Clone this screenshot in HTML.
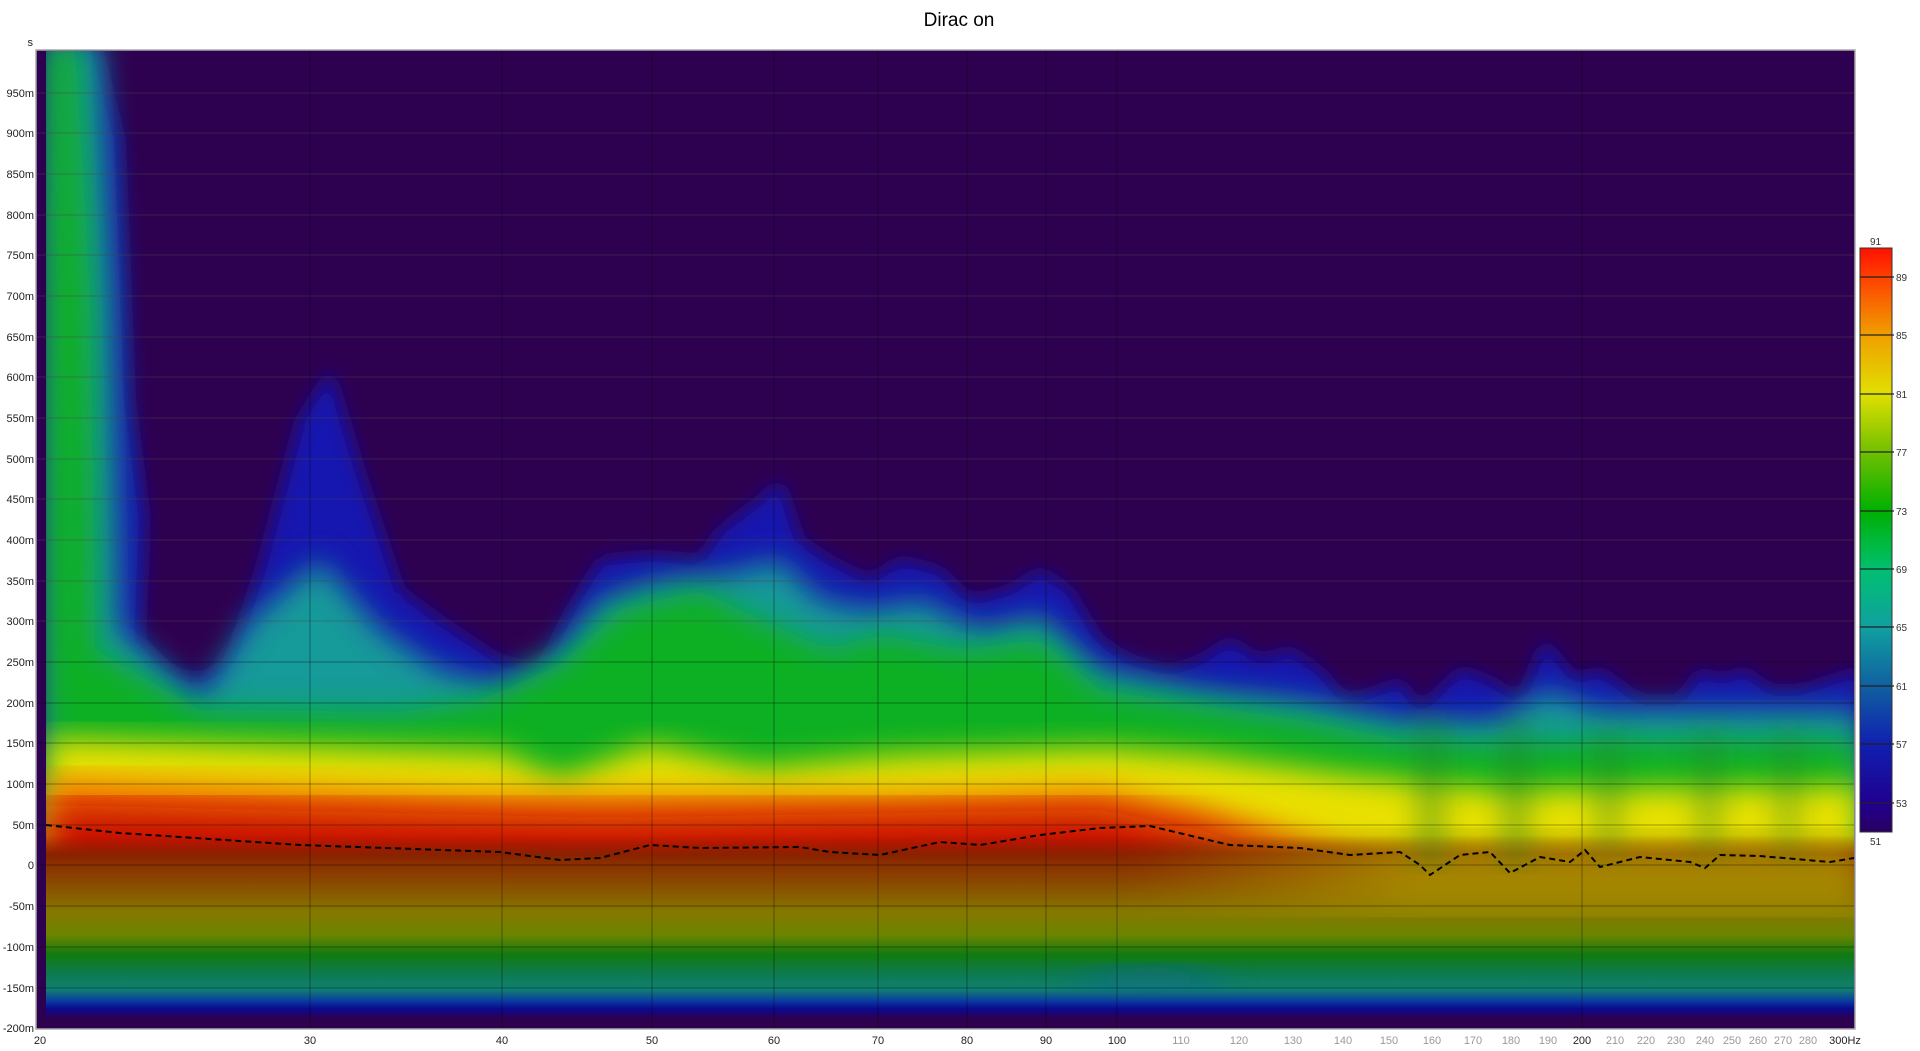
<!DOCTYPE html>
<html><head><meta charset="utf-8"><style>
html,body{margin:0;padding:0;background:#fff;width:1920px;height:1051px;overflow:hidden}
svg{display:block}
text{font-family:"Liberation Sans",sans-serif}
</style></head><body>
<svg width="1920" height="1051" viewBox="0 0 1920 1051" xmlns="http://www.w3.org/2000/svg">
<defs>
<clipPath id="pc"><rect x="37" y="51" width="1817" height="977"/></clipPath>
<filter id="b1" x="-10%" y="-10%" width="120%" height="120%"><feGaussianBlur stdDeviation="9"/></filter>
<filter id="b2" x="-10%" y="-10%" width="120%" height="120%"><feGaussianBlur stdDeviation="15"/></filter>
<filter id="b3" x="-10%" y="-10%" width="120%" height="120%"><feGaussianBlur stdDeviation="20"/></filter>
<linearGradient id="bot" x1="0" y1="0" x2="0" y2="1">
<stop offset="0" stop-color="#8c1c00" stop-opacity="0"/>
<stop offset="0.1" stop-color="#8a2200"/>
<stop offset="0.25" stop-color="#8a4a00"/>
<stop offset="0.4" stop-color="#857800"/>
<stop offset="0.52" stop-color="#6a8400"/>
<stop offset="0.62" stop-color="#107a10"/>
<stop offset="0.72" stop-color="#0e7a50"/>
<stop offset="0.8" stop-color="#108070"/>
<stop offset="0.86" stop-color="#0a3aa0"/>
<stop offset="0.9" stop-color="#0a0a90"/>
<stop offset="0.95" stop-color="#2e0050"/>
<stop offset="1" stop-color="#2e0050"/>
</linearGradient>
<linearGradient id="rfade" x1="0" y1="0" x2="1" y2="0">
<stop offset="0" stop-color="#b09000" stop-opacity="0"/>
<stop offset="0.6" stop-color="#b09000" stop-opacity="0"/>
<stop offset="0.75" stop-color="#b0a000" stop-opacity="0.7"/>
<stop offset="1" stop-color="#b0a000" stop-opacity="0.7"/>
</linearGradient>
<linearGradient id="cb" x1="0" y1="0" x2="0" y2="1">
<stop offset="0" stop-color="#ff1000"/>
<stop offset="0.05" stop-color="#ff4000"/>
<stop offset="0.15" stop-color="#f0a000"/>
<stop offset="0.25" stop-color="#e0e000"/>
<stop offset="0.35" stop-color="#70c000"/>
<stop offset="0.45" stop-color="#00b000"/>
<stop offset="0.55" stop-color="#00c070"/>
<stop offset="0.65" stop-color="#10a0a0"/>
<stop offset="0.75" stop-color="#1060a0"/>
<stop offset="0.85" stop-color="#1020b0"/>
<stop offset="0.95" stop-color="#200090"/>
<stop offset="1" stop-color="#2a0060"/>
</linearGradient>
</defs>

<text x="959" y="26" font-size="19" text-anchor="middle" fill="#000">Dirac on</text>

<rect x="36" y="50" width="1819" height="979" fill="#2e0050" stroke="#aaa" stroke-width="1.5"/>
<g clip-path="url(#pc)">
<polygon filter="url(#b1)" fill="#1414b0" points="47,40 95,40 120,140 130,400 145,520 140,640 170,670 200,680 230,660 260,570 300,420 330,370 360,470 400,590 440,620 470,640 500,660 540,670 570,610 600,560 650,555 700,560 720,530 760,500 780,480 800,540 830,560 870,580 900,560 940,570 970,600 1010,590 1040,570 1070,590 1100,640 1130,660 1170,670 1200,660 1230,640 1260,660 1290,650 1320,670 1345,700 1380,690 1400,680 1420,710 1460,670 1490,680 1520,700 1545,640 1575,680 1600,670 1640,700 1680,700 1700,670 1720,680 1745,670 1770,690 1800,690 1830,680 1860,670 1860,900 47,900"/>
<polygon filter="url(#b2)" fill="#159a9a" points="47,40 100,40 112,300 120,630 200,700 250,620 320,560 380,630 440,670 500,685 560,650 600,600 660,580 720,575 780,560 820,600 870,610 920,600 980,630 1040,615 1100,670 1200,690 1300,700 1400,720 1500,720 1545,690 1600,710 1700,710 1860,710 1860,900 47,900"/>
<polygon filter="url(#b2)" fill="#10b020" points="47,40 75,40 90,300 95,650 200,710 400,712 480,700 560,665 620,610 700,590 760,620 830,650 880,635 960,650 1040,640 1100,690 1200,705 1300,720 1400,740 1500,745 1600,740 1700,740 1860,740 1860,900 47,900"/>
<polygon filter="url(#b2)" fill="#e8e000" points="47,738 500,752 560,778 650,745 760,768 900,755 1100,748 1200,755 1350,775 1500,790 1860,785 1860,900 47,900"/>
<polygon filter="url(#b2)" fill="#f07000" points="47,778 500,795 600,795 900,795 1100,788 1200,808 1300,835 1400,865 1500,875 1860,875 1860,900 47,900"/>
<polygon filter="url(#b3)" fill="#c81000" points="47,805 600,818 1100,810 1200,830 1300,865 1350,905 47,905"/>
<rect x="46" y="835" width="1815" height="193" fill="url(#bot)"/>
<rect x="46" y="835" width="1815" height="75" fill="url(#rfade)" filter="url(#b2)"/>
<path d="M1060,990 Q1150,940 1240,990 Z" fill="#1060a0" opacity="0.5" filter="url(#b2)"/>
<g filter="url(#b2)" fill="#208020" opacity="0.55">
<rect x="1420" y="720" width="22" height="140"/>
<rect x="1505" y="720" width="22" height="140"/>
<rect x="1600" y="730" width="18" height="120"/>
<rect x="1700" y="730" width="18" height="120"/>
<rect x="1780" y="730" width="16" height="120"/>
</g>
<rect x="37" y="51" width="9" height="977" fill="#2e0050"/>
<g stroke="#000" stroke-opacity="0.35" stroke-width="1">
<line x1="37" x2="1854" y1="93" y2="93"/><line x1="37" x2="1854" y1="133" y2="133"/><line x1="37" x2="1854" y1="174" y2="174"/><line x1="37" x2="1854" y1="215" y2="215"/><line x1="37" x2="1854" y1="255" y2="255"/><line x1="37" x2="1854" y1="296" y2="296"/><line x1="37" x2="1854" y1="337" y2="337"/><line x1="37" x2="1854" y1="377" y2="377"/><line x1="37" x2="1854" y1="418" y2="418"/><line x1="37" x2="1854" y1="459" y2="459"/><line x1="37" x2="1854" y1="499" y2="499"/><line x1="37" x2="1854" y1="540" y2="540"/><line x1="37" x2="1854" y1="581" y2="581"/><line x1="37" x2="1854" y1="621" y2="621"/><line x1="37" x2="1854" y1="662" y2="662"/><line x1="37" x2="1854" y1="703" y2="703"/><line x1="37" x2="1854" y1="743" y2="743"/><line x1="37" x2="1854" y1="784" y2="784"/><line x1="37" x2="1854" y1="825" y2="825"/><line x1="37" x2="1854" y1="865" y2="865"/><line x1="37" x2="1854" y1="906" y2="906"/><line x1="37" x2="1854" y1="947" y2="947"/><line x1="37" x2="1854" y1="988" y2="988"/>
<line y1="51" y2="1028" x1="310" x2="310"/><line y1="51" y2="1028" x1="502" x2="502"/><line y1="51" y2="1028" x1="652" x2="652"/><line y1="51" y2="1028" x1="774" x2="774"/><line y1="51" y2="1028" x1="878" x2="878"/><line y1="51" y2="1028" x1="967" x2="967"/><line y1="51" y2="1028" x1="1046" x2="1046"/><line y1="51" y2="1028" x1="1117" x2="1117"/><line y1="51" y2="1028" x1="1582" x2="1582"/>
</g>
<g stroke="#fff" stroke-opacity="0.12" stroke-width="1">
<line x1="37" x2="1854" y1="93" y2="93"/><line x1="37" x2="1854" y1="133" y2="133"/><line x1="37" x2="1854" y1="174" y2="174"/><line x1="37" x2="1854" y1="215" y2="215"/><line x1="37" x2="1854" y1="255" y2="255"/><line x1="37" x2="1854" y1="296" y2="296"/><line x1="37" x2="1854" y1="337" y2="337"/><line x1="37" x2="1854" y1="377" y2="377"/><line x1="37" x2="1854" y1="418" y2="418"/><line x1="37" x2="1854" y1="459" y2="459"/><line x1="37" x2="1854" y1="499" y2="499"/><line x1="37" x2="1854" y1="540" y2="540"/><line x1="37" x2="1854" y1="581" y2="581"/><line x1="37" x2="1854" y1="621" y2="621"/>
</g>
<polyline fill="none" stroke="#000" stroke-width="2" stroke-dasharray="6,4" points="46,825 120,833 300,845 500,852 560,860 600,858 650,845 700,848 800,847 830,852 880,855 940,842 980,845 1040,835 1100,828 1150,826 1200,838 1230,845 1300,848 1350,855 1400,852 1420,865 1430,875 1460,855 1490,852 1510,873 1540,857 1570,862 1585,850 1600,867 1640,857 1690,862 1705,868 1720,855 1760,856 1830,862 1854,858"/>
</g>

<g font-size="11" fill="#222" text-anchor="end">
<text x="33" y="46">s</text>
<text x="34" y="97">950m</text><text x="34" y="137">900m</text><text x="34" y="178">850m</text><text x="34" y="219">800m</text><text x="34" y="259">750m</text><text x="34" y="300">700m</text><text x="34" y="341">650m</text><text x="34" y="381">600m</text><text x="34" y="422">550m</text><text x="34" y="463">500m</text><text x="34" y="503">450m</text><text x="34" y="544">400m</text><text x="34" y="585">350m</text><text x="34" y="625">300m</text><text x="34" y="666">250m</text><text x="34" y="707">200m</text><text x="34" y="747">150m</text><text x="34" y="788">100m</text><text x="34" y="829">50m</text><text x="34" y="869">0</text><text x="34" y="910">-50m</text><text x="34" y="951">-100m</text><text x="34" y="992">-150m</text><text x="34" y="1032">-200m</text>
</g>
<g font-size="11" fill="#222" text-anchor="middle">
<text x="40" y="1044">20</text><text x="310" y="1044">30</text><text x="502" y="1044">40</text><text x="652" y="1044">50</text><text x="774" y="1044">60</text><text x="878" y="1044">70</text><text x="967" y="1044">80</text><text x="1046" y="1044">90</text><text x="1117" y="1044">100</text><text x="1582" y="1044">200</text><text x="1845" y="1044">300Hz</text>
</g>
<g font-size="11" fill="#999" text-anchor="middle">
<text x="1181" y="1044">110</text><text x="1239" y="1044">120</text><text x="1293" y="1044">130</text><text x="1343" y="1044">140</text><text x="1389" y="1044">150</text><text x="1432" y="1044">160</text><text x="1473" y="1044">170</text><text x="1511" y="1044">180</text><text x="1548" y="1044">190</text><text x="1615" y="1044">210</text><text x="1646" y="1044">220</text><text x="1676" y="1044">230</text><text x="1705" y="1044">240</text><text x="1732" y="1044">250</text><text x="1758" y="1044">260</text><text x="1783" y="1044">270</text><text x="1808" y="1044">280</text>
</g>

<rect x="1860" y="248" width="32" height="584" fill="url(#cb)" stroke="#333" stroke-width="1"/>
<g stroke="#222" stroke-width="1.2">
<line x1="1860" x2="1894" y1="277" y2="277"/><line x1="1860" x2="1894" y1="335" y2="335"/><line x1="1860" x2="1894" y1="394" y2="394"/><line x1="1860" x2="1894" y1="452" y2="452"/><line x1="1860" x2="1894" y1="511" y2="511"/><line x1="1860" x2="1894" y1="569" y2="569"/><line x1="1860" x2="1894" y1="627" y2="627"/><line x1="1860" x2="1894" y1="686" y2="686"/><line x1="1860" x2="1894" y1="744" y2="744"/><line x1="1860" x2="1894" y1="803" y2="803"/>
</g>
<g font-size="10" fill="#333">
<text x="1870" y="245">91</text>
<text x="1896" y="281">89</text><text x="1896" y="339">85</text><text x="1896" y="398">81</text><text x="1896" y="456">77</text><text x="1896" y="515">73</text><text x="1896" y="573">69</text><text x="1896" y="631">65</text><text x="1896" y="690">61</text><text x="1896" y="748">57</text><text x="1896" y="807">53</text>
<text x="1870" y="845">51</text>
</g>
</svg>
</body></html>
